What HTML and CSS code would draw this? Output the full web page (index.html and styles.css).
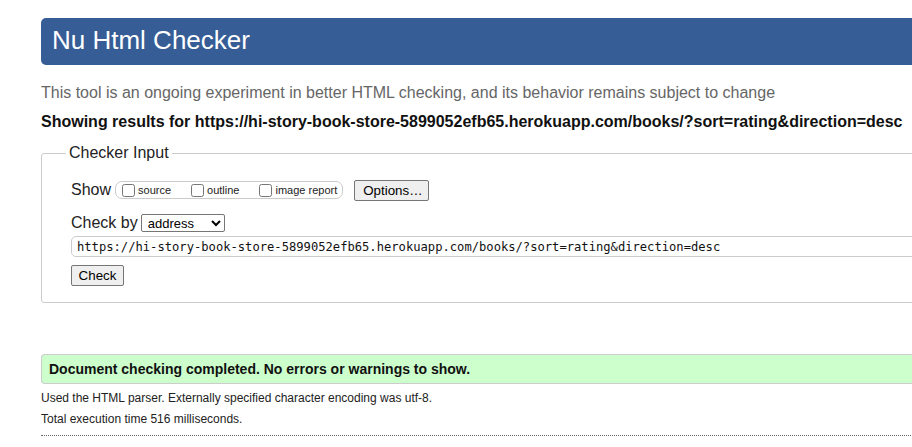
FILE: index.html
```html
<!DOCTYPE html>
<html lang="en">
<head>
<meta charset="utf-8">
<title>Nu Html Checker</title>
<link rel="stylesheet" href="styles.css">
</head>
<body>
<div class="page">
  <h1 class="banner">Nu Html Checker</h1>
  <p class="tagline">This tool is an ongoing experiment in better HTML checking, and its behavior remains subject to change</p>
  <p class="results-for">Showing results for https://hi-story-book-store-5899052efb65.herokuapp.com/books/?sort=rating&amp;direction=desc</p>
  <form class="checker-form">
    <fieldset class="checker-input">
      <legend class="legend">Checker Input</legend>
      <div class="row row-show">
        <span class="row-label">Show</span>
        <span class="show-options">
          <label class="opt"><input type="checkbox" class="cb"><span>source</span></label>
          <label class="opt"><input type="checkbox" class="cb"><span>outline</span></label>
          <label class="opt"><input type="checkbox" class="cb"><span>image report</span></label>
        </span>
        <button type="button" class="btn btn-options">Options…</button>
      </div>
      <div class="row row-checkby">
        <span class="row-label">Check by</span>
        <select class="select">
          <option>address</option>
        </select>
      </div>
      <input class="url" type="text" value="https://hi-story-book-store-5899052efb65.herokuapp.com/books/?sort=rating&amp;direction=desc">
      <div class="row row-submit">
        <button type="button" class="btn btn-check">Check</button>
      </div>
    </fieldset>
  </form>
  <p class="success">Document checking completed. No errors or warnings to show.</p>
  <p class="details">Used the HTML parser. Externally specified character encoding was utf-8.</p>
  <p class="details details-time">Total execution time 516 milliseconds.</p>
  <hr class="sep">
</div>
</body>
</html>
```

FILE: styles.css
```css
html, body {
  margin: 0;
  padding: 0;
  overflow: hidden;
  background: #fff;
}

body {
  font-family: "Liberation Sans", Arial, sans-serif;
  color: #222;
}

.page {
  display: flex;
  flex-direction: column;
  width: 1100px;
  padding: 18px 0 0 41px;
}

.banner {
  margin: 0;
  height: 47px;
  box-sizing: border-box;
  padding: 0 0 2px 11px;
  line-height: 45px;
  font-size: 26px;
  font-weight: normal;
  color: #fff;
  background: #365d95;
  border-radius: 5px 0 0 5px;
}

.tagline {
  margin: 18px 0 0;
  font-size: 16px;
  line-height: 20px;
  color: #666;
}

.results-for {
  margin: 9px 0 0;
  font-size: 16px;
  line-height: 20px;
  font-weight: bold;
  color: #111;
}

.checker-form {
  margin: 11px 0 0;
}

.checker-input {
  margin: 0;
  padding: 16px 0 16px 29px;
  border: 1px solid #ccc;
  border-radius: 3px 0 0 3px;
  min-width: 0;
}

.legend {
  margin-left: -5px;
  padding: 0 3px;
  font-size: 16px;
  line-height: 20px;
  color: #222;
}

.row {
  display: flex;
  align-items: center;
}

.row-show {
  height: 22px;
}

.row-checkby {
  margin-top: 12px;
  height: 20px;
}

.row-label {
  font-size: 16px;
  line-height: 20px;
}

.show-options {
  display: flex;
  align-items: center;
  gap: 20px;
  height: 18px;
  box-sizing: border-box;
  margin-left: 4px;
  padding: 0 5px 0 6px;
  border: 1px solid #ccc;
  border-radius: 7px;
}

.opt {
  display: flex;
  align-items: center;
  font-size: 11px;
  line-height: 13px;
}

.cb {
  margin: 0 3px 0 0;
  width: 13px;
  height: 13px;
}

.btn {
  font-family: "Liberation Sans", Arial, sans-serif;
  font-size: 13.33px;
  height: 21px;
  box-sizing: border-box;
  padding: 0 8px;
  color: #000;
  background: #efefef;
  border: 1px solid #767676;
  border-radius: 2px;
}

.btn-options {
  margin-left: 11px;
  width: 75px;
}

.btn-check {
  width: 53px;
  padding: 0 6px;
}

.select {
  margin-left: 3px;
  width: 84px;
  height: 18px;
  box-sizing: border-box;
  font-family: "Liberation Sans", Arial, sans-serif;
  font-size: 13px;
  padding: 0 0 0 2px;
  color: #000;
  background: #fff;
  border: 1px solid #767676;
  border-radius: 2px;
}

.url {
  display: block;
  margin: 3px 0 0;
  width: 1000px;
  height: 21px;
  box-sizing: border-box;
  padding: 0 5px;
  font-family: "DejaVu Sans Mono", "Liberation Mono", monospace;
  font-size: 12.15px;
  color: #111;
  border: 1px solid #ccc;
  border-radius: 5px;
  background: #fff;
}

.row-submit {
  margin-top: 8px;
}

.success {
  margin: 51px 0 0;
  padding: 0 7px;
  font-size: 14px;
  line-height: 28px;
  font-weight: bold;
  color: #111;
  background: #ccffcc;
  border: 1px solid #ccc;
  border-right: 0;
  border-radius: 4px 0 0 4px;
}

.details {
  margin: 7px 0 0;
  font-size: 12px;
  line-height: 14px;
  color: #222;
}

.details-time {
  margin-top: 7px;
}

.sep {
  margin: 9px 0 0;
  height: 0;
  border: 0;
  border-top: 1px dotted #666;
}
```
